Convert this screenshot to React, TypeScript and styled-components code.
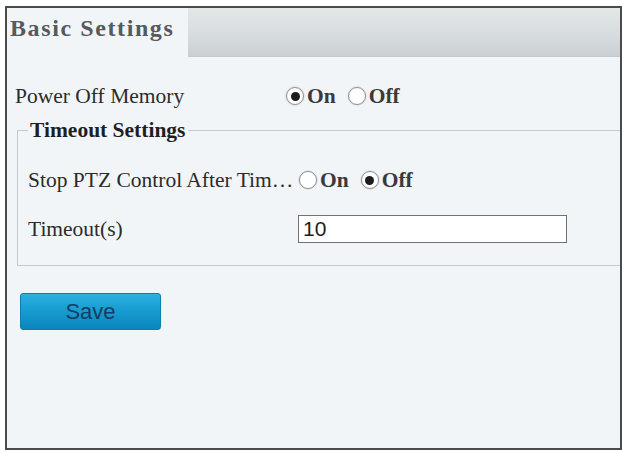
import React from 'react';
import styled, { createGlobalStyle } from 'styled-components';

const GlobalStyle = createGlobalStyle`
  html, body {
    margin: 0;
    padding: 0;
    background: #ffffff;
  }
  body {
    font-family: "Liberation Serif", "Times New Roman", serif;
    color: #2b2b2b;
  }
`

const Frame = styled.div`
  box-sizing: border-box;
  margin: 6px 0 0 5px;
  width: 617px;
  height: 444px;
  border: 2px solid #4b4b4b;
  background: #f2f5f8;
  display: flex;
  flex-direction: column;
`

const TabBar = styled.div`
  display: flex;
  height: 48px;
  flex-shrink: 0;
  background: linear-gradient(to bottom, #e3e7e8 0%, #d6dbde 60%, #c9cfd3 100%);
  border-bottom: 1px solid #c3c9cd;
`

const Tab = styled.div<{ $active?: boolean }>`
  display: flex;
  align-items: center;
  width: 181px;
  padding: 0 0 8px 3px;
  box-sizing: border-box;
  background: ${p => (p.$active ? '#f2f5f8' : 'transparent')};
  margin-bottom: ${p => (p.$active ? '-1px' : '0')};
  font-weight: bold;
  font-size: 24px;
  letter-spacing: 1.6px;
  color: #555a5e;
`

const Content = styled.div`
  padding: 23px 0 0 8px;
  display: flex;
  flex-direction: column;
`

const Row = styled.div`
  display: flex;
  align-items: center;
  height: 32px;
  font-size: 21.5px;
`

const Label = styled.div`
  width: 271px;
  flex-shrink: 0;
  white-space: nowrap;
  overflow: hidden;
  text-overflow: ellipsis;
`

const Group = styled.fieldset`
  margin: 6px 0 0 2px;
  padding: 22px 0 20px 10px;
  border: 1px solid #c6cacd;
  border-right: none;
  min-width: 0;
`

const Legend = styled.legend`
  padding: 0 2px;
  font-weight: bold;
  font-size: 21.5px;
  line-height: 24px;
  color: #1f1f1f;
`

const Fields = styled.div`
  display: flex;
  flex-direction: column;
  gap: 17px;
`

const RadioSet = styled.div`
  display: flex;
  align-items: center;
  font-weight: bold;
  color: #3a3a3a;
`

const Option = styled.label`
  display: flex;
  align-items: center;
  gap: 3px;
  margin-right: 12px;
`

const Dot = styled.span<{ $on?: boolean }>`
  box-sizing: border-box;
  width: 18px;
  height: 18px;
  border-radius: 50%;
  border: 1px solid #8c8f92;
  background: #ffffff;
  box-shadow: 0 0 0 1px #e2e5e8;
  display: flex;
  align-items: center;
  justify-content: center;
  &::after {
    content: '';
    width: 9px;
    height: 9px;
    border-radius: 50%;
    background: ${p => (p.$on ? '#1c1c1c' : 'transparent')};
  }
`

const TextBox = styled.div`
  box-sizing: border-box;
  width: 269px;
  height: 28px;
  margin-left: -1px;
  border: 1px solid #6f7377;
  background: #ffffff;
  font-family: "Liberation Sans", Arial, sans-serif;
  font-size: 21px;
  line-height: 26px;
  padding-left: 4px;
  color: #1e1e1e;
`

const SaveButton = styled.button`
  margin: 27px 0 0 5px;
  width: 141px;
  height: 37px;
  border: 1px solid #0a7fb2;
  border-radius: 3px;
  background: linear-gradient(to bottom, #2cb0e0 0%, #169bd0 50%, #0a86bb 100%);
  font-family: "Liberation Sans", Arial, sans-serif;
  font-size: 22px;
  color: #103f63;
  padding: 0;
  cursor: pointer;
`

function Radio({ on }: { on: boolean }) {
  return (
    <RadioSet>
      <Option>
        <Dot $on={on} />
        On
      </Option>
      <Option>
        <Dot $on={!on} />
        Off
      </Option>
    </RadioSet>
  )
}

export default function App() {
  return (
    <>
      <GlobalStyle />
      <Frame>
        <TabBar>
          <Tab $active>Basic Settings</Tab>
        </TabBar>
        <Content>
          <Row>
            <Label>Power Off Memory</Label>
            <Radio on={true} />
          </Row>
          <Group>
            <Legend>Timeout Settings</Legend>
            <Fields>
              <Row>
                <Label>Stop PTZ Control After Timeout</Label>
                <Radio on={false} />
              </Row>
              <Row>
                <Label>Timeout(s)</Label>
                <TextBox>10</TextBox>
              </Row>
            </Fields>
          </Group>
          <div>
            <SaveButton>Save</SaveButton>
          </div>
        </Content>
      </Frame>
    </>
  )
}
